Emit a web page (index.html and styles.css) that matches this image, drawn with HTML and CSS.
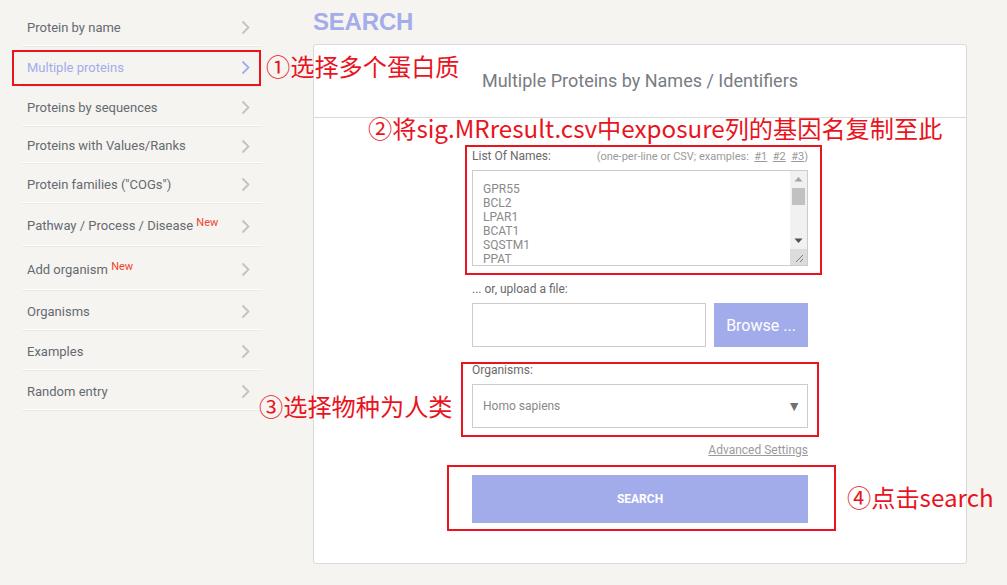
FILE: index.html
```html
<!DOCTYPE html>
<html>
<head>
<meta charset="utf-8">
<link rel="stylesheet" href="styles.css">
</head>
<body>
<div class="page">
  <aside class="sidebar">
    <ul class="nav">
      <li class="nav-item"><span>Protein by name</span><svg class="chev" viewBox="0 0 9 15"><polyline points="1.5,1.5 7.5,7.5 1.5,13.5"/></svg></li>
      <li class="nav-item active"><span>Multiple proteins</span><svg class="chev" viewBox="0 0 9 15"><polyline points="1.5,1.5 7.5,7.5 1.5,13.5"/></svg></li>
      <li class="nav-item"><span>Proteins by sequences</span><svg class="chev" viewBox="0 0 9 15"><polyline points="1.5,1.5 7.5,7.5 1.5,13.5"/></svg></li>
      <li class="nav-item short"><span>Proteins with Values/Ranks</span><svg class="chev" viewBox="0 0 9 15"><polyline points="1.5,1.5 7.5,7.5 1.5,13.5"/></svg></li>
      <li class="nav-item"><span>Protein families ("COGs")</span><svg class="chev" viewBox="0 0 9 15"><polyline points="1.5,1.5 7.5,7.5 1.5,13.5"/></svg></li>
      <li class="nav-item tall"><span>Pathway / Process / Disease <sup class="new">New</sup></span><svg class="chev" viewBox="0 0 9 15"><polyline points="1.5,1.5 7.5,7.5 1.5,13.5"/></svg></li>
      <li class="nav-item taller"><span>Add organism <sup class="new">New</sup></span><svg class="chev" viewBox="0 0 9 15"><polyline points="1.5,1.5 7.5,7.5 1.5,13.5"/></svg></li>
      <li class="nav-item"><span>Organisms</span><svg class="chev" viewBox="0 0 9 15"><polyline points="1.5,1.5 7.5,7.5 1.5,13.5"/></svg></li>
      <li class="nav-item"><span>Examples</span><svg class="chev" viewBox="0 0 9 15"><polyline points="1.5,1.5 7.5,7.5 1.5,13.5"/></svg></li>
      <li class="nav-item"><span>Random entry</span><svg class="chev" viewBox="0 0 9 15"><polyline points="1.5,1.5 7.5,7.5 1.5,13.5"/></svg></li>
    </ul>
  </aside>

  <main class="main">
    <h1 class="title">SEARCH</h1>
    <section class="panel">
      <header class="panel-head">Multiple Proteins by Names / Identifiers</header>
      <div class="panel-body">
        <div class="form">
          <div class="label-row">
            <span class="label">List Of Names:</span>
            <span class="hint">(one-per-line or CSV; examples:&nbsp; <u>#1</u>&nbsp; <u>#2</u>&nbsp; <u>#3</u>)</span>
          </div>
          <div class="textarea">
            <div class="ta-text">GPR55<br>BCL2<br>LPAR1<br>BCAT1<br>SQSTM1<br>PPAT</div>
            <div class="scrollbar">
              <svg class="sb-up" viewBox="0 0 17 17"><polygon points="4.5,10.5 8.5,6 12.5,10.5" /></svg>
              <div class="sb-track"><div class="sb-thumb"></div></div>
              <svg class="sb-down" viewBox="0 0 17 17"><polygon points="4.5,6.5 8.5,11 12.5,6.5" /></svg>
              <div class="sb-corner"><svg viewBox="0 0 16 16"><line x1="13" y1="6" x2="6" y2="13"/><line x1="13" y1="10" x2="10" y2="13"/></svg></div>
            </div>
          </div>

          <div class="label upload-label">... or, upload a file:</div>
          <div class="file-row">
            <div class="file-input"></div>
            <div class="browse">Browse ...</div>
          </div>

          <div class="label org-label">Organisms:</div>
          <div class="select">
            <span>Homo sapiens</span>
            <span class="caret">&#9660;</span>
          </div>

          <div class="advanced"><span>Advanced Settings</span></div>

          <div class="search-btn">SEARCH</div>
        </div>
      </div>
    </section>
  </main>

  <div class="redbox b1"></div>
  <div class="redbox b2"></div>
  <div class="redbox b3"></div>
  <div class="redbox b4"></div>

  <div class="note n1">①选择多个蛋白质</div>
  <div class="note n2">②将sig.MRresult.csv中exposure列的基因名复制至此</div>
  <div class="note n3">③选择物种为人类</div>
  <div class="note n4">④点击search</div>
</div>
</body>
</html>
```

FILE: styles.css
```css
* { box-sizing: border-box; }

html, body {
  margin: 0;
  padding: 0;
  background: #f5f4f1;
  font-family: Roboto, "Liberation Sans", sans-serif;
}

.page {
  position: relative;
  width: 1007px;
  height: 585px;
  display: flex;
  overflow: hidden;
}

/* Sidebar */
.sidebar {
  width: 240px;
  margin-left: 22px;
  padding-top: 6px;
  flex: none;
}

.nav {
  list-style: none;
  margin: 0;
  padding: 0;
}

.nav-item {
  height: 40px;
  border-bottom: 1px solid #ffffff;
  box-shadow: 0 1px 0 #ebe9e5;
  display: flex;
  align-items: center;
  justify-content: space-between;
  padding-left: 5px;
  padding-right: 12px;
  padding-top: 3px;
  font-size: 13px;
  color: #666a70;
}

.nav-item.short { height: 37px; }
.nav-item.tall { height: 43px; }
.nav-item.taller { height: 44px; }

.nav-item.active { color: #a3acea; }
.nav-item.active .chev polyline { stroke: #a3acea; }

.new {
  color: #f0432e;
  font-size: 11px;
  vertical-align: 4px;
  line-height: 0;
}

.chev {
  width: 9px;
  height: 15px;
  margin-top: 1px;
}
.chev polyline {
  fill: none;
  stroke: #c2c2c2;
  stroke-width: 1.8;
}

/* Main */
.main {
  margin-left: 51px;
  width: 654px;
  flex: none;
}

.title {
  margin: 0;
  height: 44px;
  padding-top: 7px;
  font-size: 24px;
  line-height: 30px;
  font-weight: 700;
  color: #a4acea;
  font-family: "Liberation Sans", Arial, sans-serif;
  letter-spacing: -0.2px;
}

.panel {
  background: #ffffff;
  border: 1px solid #d9d9d9;
  border-radius: 3px;
  height: 520px;
}

.panel-head {
  height: 73px;
  border-bottom: 1px solid #dadada;
  display: flex;
  align-items: center;
  justify-content: center;
  padding-bottom: 2px;
  font-size: 18px;
  color: #787c82;
}

.panel-body {
  padding-top: 30px;
  display: flex;
  justify-content: center;
}

.form {
  width: 336px;
  display: flex;
  flex-direction: column;
}

.label-row {
  display: flex;
  justify-content: space-between;
  align-items: center;
  height: 16px;
}

.label {
  font-size: 12px;
  color: #6a6a6a;
  line-height: 16px;
}

.hint {
  font-size: 11px;
  color: #9a9a9a;
}

.textarea {
  margin-top: 6px;
  height: 96px;
  border: 1px solid #cccccc;
  position: relative;
  overflow: hidden;
}

.ta-text {
  padding: 11px 0 0 10px;
  font-size: 12px;
  line-height: 14px;
  color: #8a8a8a;
}

.scrollbar {
  position: absolute;
  top: 0;
  right: 0;
  width: 17px;
  height: 94px;
  background: #f1f1f1;
  display: flex;
  flex-direction: column;
}

.sb-up, .sb-down {
  width: 17px;
  height: 17px;
  flex: none;
}
.sb-up polygon { fill: #a3a3a3; }
.sb-down polygon { fill: #505050; }

.sb-track {
  height: 61px;
  position: relative;
  flex: none;
}
.sb-track .sb-thumb {
  position: absolute;
  top: 0;
  left: 2px;
  width: 13px;
  height: 17px;
  background: #c1c1c1;
}
.sb-down { margin-top: -17px; }

.sb-corner {
  margin-top: auto;
  height: 16px;
  background: #dcdcdc;
}
.sb-corner svg { width: 16px; height: 16px; display: block; }
.sb-corner line { stroke: #7a7a7a; stroke-width: 1; }

.upload-label {
  margin-top: 15px;
}

.file-row {
  margin-top: 6px;
  display: flex;
  gap: 8px;
  height: 44px;
}

.file-input {
  width: 234px;
  border: 1px solid #cccccc;
}

.browse {
  flex: 1;
  background: #a3acea;
  color: #ffffff;
  font-size: 16px;
  display: flex;
  align-items: center;
  justify-content: center;
}

.org-label {
  margin-top: 15px;
}

.select {
  margin-top: 6px;
  height: 44px;
  border: 1px solid #cccccc;
  display: flex;
  align-items: center;
  justify-content: space-between;
  padding: 0 6px 0 10px;
  font-size: 12px;
  color: #888888;
}

.caret {
  font-size: 14px;
  color: #707070;
}

.advanced {
  margin-top: 15px;
  text-align: right;
  font-size: 12px;
  line-height: 14px;
  color: #9a9a9a;
}
.advanced span { text-decoration: underline; }

.search-btn {
  margin-top: 18px;
  height: 48px;
  background: #a3acea;
  color: #ffffff;
  font-size: 12px;
  font-weight: 700;
  display: flex;
  align-items: center;
  justify-content: center;
}

/* Annotation overlays */
.redbox {
  position: absolute;
  border: 2px solid #e8141e;
}
.b1 { left: 12px; top: 50px; width: 249px; height: 36px; }
.b2 { left: 465px; top: 145px; width: 357px; height: 130px; }
.b3 { left: 461px; top: 362px; width: 358px; height: 75px; }
.b4 { left: 447px; top: 465px; width: 389px; height: 66px; }

.note {
  position: absolute;
  font-family: "Noto Sans CJK SC", "Noto Sans", sans-serif;
  font-size: 24.2px;
  line-height: 28px;
  color: #e8141e;
  white-space: nowrap;
}
.n1 { left: 266px; top: 52px; }
.n2 { left: 368px; top: 114px; }
.n3 { left: 259px; top: 392px; }
.n4 { left: 847px; top: 483px; }
```
